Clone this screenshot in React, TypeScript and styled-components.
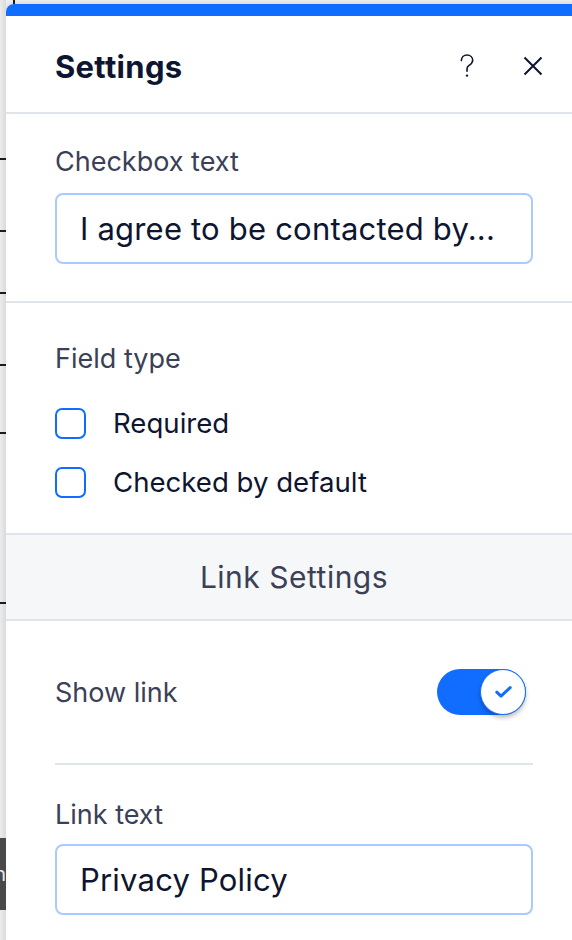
import React from 'react'
import styled, { createGlobalStyle } from 'styled-components'

const GlobalStyle = createGlobalStyle`
  html, body {
    margin: 0;
    padding: 0;
    background: #efefef;
    overflow: hidden;
  }
  * {
    box-sizing: border-box;
  }
`

const Page = styled.div`
  position: relative;
  display: flex;
  width: 572px;
  height: 940px;
  padding-top: 4px;
  overflow: hidden;
  background: #f0f0f0;
  font-family: Inter, "Noto Sans", sans-serif;
`

const TopTick = styled.span`
  position: absolute;
  left: 13px;
  top: 0;
  width: 2px;
  height: 4px;
  background: #1a1a1a;
`

const Ruler = styled.div`
  position: relative;
  flex: 0 0 6px;
  margin-top: -4px;
  background: linear-gradient(to right, #ececec, #dadada);
`

const Tick = styled.span<{ top: number }>`
  position: absolute;
  left: 0;
  top: ${({ top }) => top}px;
  width: 6px;
  height: 2px;
  background: #1c1c1c;
`

const CanvasChip = styled.div`
  position: absolute;
  left: 0;
  top: 838px;
  width: 6px;
  height: 72px;
  background: #4a4848;
  color: #e8e8e8;
  font-size: 20px;
  line-height: 72px;
  overflow: hidden;
  direction: rtl;
`

const Panel = styled.div`
  flex: 0 0 576px;
  background: #fff;
  border-radius: 8px 0 0 0;
  overflow: hidden;
  box-shadow: 0 0 6px rgba(0, 0, 0, 0.15);
`

const TopBar = styled.div`
  height: 12px;
  background: #116dff;
`

const Header = styled.div`
  display: flex;
  align-items: center;
  height: 98px;
  padding: 4px 37px 0 49px;
  border-bottom: 2px solid #dfe5eb;
`

const Title = styled.h1`
  flex: 1;
  margin: 0;
  font-size: 31px;
  font-weight: 700;
  color: #0e1530;
  letter-spacing: 0.3px;
`

const IconButton = styled.button`
  display: flex;
  align-items: center;
  justify-content: center;
  width: 24px;
  height: 24px;
  padding: 0;
  border: 0;
  background: none;
  color: #0e1530;
  & + & {
    margin-left: 42px;
  }
`

const Section = styled.div<{ pt: number; pb: number; last?: boolean }>`
  padding: ${({ pt, pb }) => `${pt}px 49px ${pb}px`};
  border-bottom: ${({ last }) => (last ? '0' : '2px solid #dfe5eb')};
`

const Label = styled.div`
  font-size: 27px;
  line-height: 30px;
  color: #3b4057;
`

const TextInput = styled.div<{ mt: number }>`
  display: flex;
  align-items: center;
  margin-top: ${({ mt }) => mt}px;
  height: 71px;
  padding: 0 23px;
  border: 2px solid #a8caff;
  border-radius: 8px;
  font-size: 31px;
  letter-spacing: 0.2px;
  color: #0e1530;
  white-space: nowrap;
  overflow: hidden;
`

const CheckRow = styled.label<{ mt: number }>`
  display: flex;
  align-items: center;
  height: 40px;
  margin-top: ${({ mt }) => mt}px;
  font-size: 27.6px;
  color: #0e1530;
`

const Box = styled.span`
  flex: 0 0 31px;
  height: 31px;
  margin-right: 27px;
  border: 2px solid #116dff;
  border-radius: 7px;
  background: #fff;
`

const SubHeader = styled.div`
  display: flex;
  align-items: center;
  justify-content: center;
  height: 86px;
  background: #f5f7f8;
  border-bottom: 2px solid #dfe5eb;
  font-size: 30px;
  letter-spacing: 0.5px;
  color: #3b4057;
`

const ToggleRow = styled.div`
  display: flex;
  align-items: center;
  justify-content: space-between;
  height: 144px;
  margin: 0 49px;
  padding-right: 7px;
  border-bottom: 2px solid #dfe5eb;
  font-size: 27px;
  color: #3b4057;
`

const Track = styled.span<{ on: boolean }>`
  display: flex;
  align-items: center;
  justify-content: ${({ on }) => (on ? 'flex-end' : 'flex-start')};
  width: 89px;
  height: 46px;
  border-radius: 23px;
  background: ${({ on }) => (on ? '#116dff' : '#dfe5eb')};
`

const Knob = styled.span`
  display: flex;
  align-items: center;
  justify-content: center;
  width: 46px;
  height: 46px;
  border-radius: 50%;
  background: #fff;
  border: 1px solid #116dff;
  box-shadow: 0 3px 4px rgba(0, 0, 0, 0.25);
  color: #116dff;
`

const QuestionIcon = () => (
  <svg width="14" height="24" viewBox="0 0 14 24" fill="none">
    <path
      d="M1.4 6.6C1.4 3.3 3.9 1 7 1c3.2 0 5.7 2.2 5.7 5.3 0 2.5-1.6 3.8-3.6 5.1-1.4.9-2.1 1.9-2.1 3.6v2.2"
      stroke="currentColor"
      strokeWidth="1.6"
      strokeLinecap="round"
    />
    <circle cx="7" cy="21.6" r="1.2" fill="currentColor" />
  </svg>
)

const CloseIcon = () => (
  <svg width="20" height="20" viewBox="0 0 20 20" fill="none">
    <path d="M1.5 1.5l17 17M18.5 1.5l-17 17" stroke="currentColor" strokeWidth="2" />
  </svg>
)

const CheckIcon = () => (
  <svg width="17" height="12" viewBox="0 0 17 12" fill="none">
    <path d="M1.8 6.2l4.2 4 9.2-8.6" stroke="currentColor" strokeWidth="3" strokeLinecap="round" strokeLinejoin="round" />
  </svg>
)

const ticks = [158, 230, 292, 364, 432, 602]

export default function App() {
  return (
    <>
      <GlobalStyle />
      <Page>
        <TopTick />
        <Ruler>
          {ticks.map((t) => (
            <Tick key={t} top={t} />
          ))}
          <CanvasChip>n</CanvasChip>
        </Ruler>
        <Panel>
          <TopBar />
          <Header>
            <Title>Settings</Title>
            <IconButton aria-label="Help">
              <QuestionIcon />
            </IconButton>
            <IconButton aria-label="Close">
              <CloseIcon />
            </IconButton>
          </Header>

          <Section pt={33} pb={37}>
            <Label>Checkbox text</Label>
            <TextInput mt={16}>I agree to be contacted by...</TextInput>
          </Section>

          <Section pt={41} pb={31}>
            <Label>Field type</Label>
            <CheckRow mt={29}>
              <Box />
              Required
            </CheckRow>
            <CheckRow mt={19}>
              <Box />
              Checked by default
            </CheckRow>
          </Section>

          <SubHeader>Link Settings</SubHeader>

          <ToggleRow>
            Show link
            <Track on>
              <Knob>
                <CheckIcon />
              </Knob>
            </Track>
          </ToggleRow>

          <Section pt={35} pb={40} last>
            <Label>Link text</Label>
            <TextInput mt={14}>Privacy Policy</TextInput>
          </Section>
        </Panel>
      </Page>
    </>
  )
}
